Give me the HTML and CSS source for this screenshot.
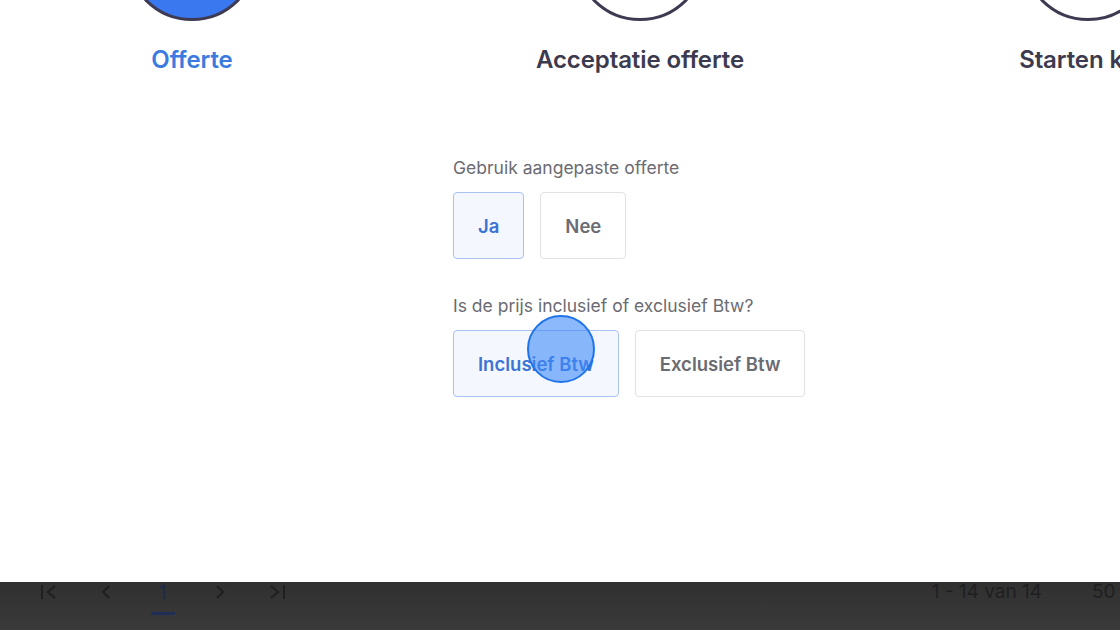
FILE: index.html
```html
<!DOCTYPE html>
<html lang="nl">
<head>
<meta charset="utf-8">
<title>Offerte</title>
<link rel="stylesheet" href="styles.css">
</head>
<body>
<div class="page">
  <main class="content">
    <div class="steps">
      <div class="step active">
        <div class="circle"></div>
        <div class="step-label">Offerte</div>
      </div>
      <div class="step">
        <div class="circle"></div>
        <div class="step-label">Acceptatie offerte</div>
      </div>
      <div class="step">
        <div class="circle"></div>
        <div class="step-label">Starten klus</div>
      </div>
    </div>

    <form class="form">
      <div class="field">
        <div class="field-label">Gebruik aangepaste offerte</div>
        <div class="options">
          <button type="button" class="option selected">Ja</button>
          <button type="button" class="option">Nee</button>
        </div>
      </div>
      <div class="field">
        <div class="field-label">Is de prijs inclusief of exclusief Btw?</div>
        <div class="options">
          <button type="button" class="option selected">Inclusief Btw<span class="cursor"></span></button>
          <button type="button" class="option">Exclusief Btw</button>
        </div>
      </div>
    </form>
  </main>

  <footer class="pager">
    <div class="pages">
      <span class="pg"><svg width="18" height="16" viewBox="0 0 18 16"><path d="M2 1v14M15 2L8 8l7 6" fill="none" stroke="currentColor" stroke-width="2"/></svg></span>
      <span class="pg"><svg width="12" height="16" viewBox="0 0 12 16"><path d="M9 2L3 8l6 6" fill="none" stroke="currentColor" stroke-width="2"/></svg></span>
      <span class="pg current">1</span>
      <span class="pg"><svg width="12" height="16" viewBox="0 0 12 16"><path d="M3 2l6 6-6 6" fill="none" stroke="currentColor" stroke-width="2"/></svg></span>
      <span class="pg"><svg width="18" height="16" viewBox="0 0 18 16"><path d="M3 2l7 6-7 6M16 1v14" fill="none" stroke="currentColor" stroke-width="2"/></svg></span>
    </div>
    <div class="range">1 - 14 van 14</div>
    <div class="per-page">50</div>
  </footer>
</div>
</body>
</html>
```

FILE: styles.css
```css
html, body {
  margin: 0;
  padding: 0;
  background: #ffffff;
  overflow: hidden;
}

body {
  font-family: Inter, "Noto Sans", "Liberation Sans", sans-serif;
  color: #3c3a4e;
}

.page {
  width: 1120px;
  height: 630px;
  display: flex;
  flex-direction: column;
  overflow: hidden;
}

.content {
  flex: 1;
  min-height: 0;
}

.steps {
  display: flex;
  margin-left: -32px;
  margin-top: -111px;
}

.step {
  flex: 0 0 448px;
  display: flex;
  flex-direction: column;
  align-items: center;
}

.circle {
  width: 132px;
  height: 132px;
  box-sizing: border-box;
  border: 3px solid #3d3a52;
  border-radius: 50%;
  background: #ffffff;
}

.step.active .circle {
  background: #3a78f0;
}

.step-label {
  margin-top: 24px;
  font-size: 24px;
  line-height: 30px;
  font-weight: 600;
  color: #3c3a4e;
  white-space: nowrap;
  letter-spacing: -0.1px;
}

.step.active .step-label {
  color: #3b7be0;
}

.form {
  padding-left: 453px;
  padding-top: 81px;
  display: flex;
  flex-direction: column;
  gap: 35px;
}

.field-label {
  font-size: 17.5px;
  line-height: 24px;
  color: #6b6b72;
  margin-bottom: 12px;
}

.options {
  display: flex;
  gap: 16px;
}

.option {
  position: relative;
  height: 67px;
  padding: 0 24px;
  box-sizing: border-box;
  border: 1px solid #e2e2e6;
  border-radius: 4px;
  background: #ffffff;
  font-family: inherit;
  font-size: 18.5px;
  font-weight: 600;
  color: #6b6b72;
  cursor: pointer;
}

.option.selected {
  background: #f4f7fd;
  border-color: #a8c3ef;
  color: #3b74d6;
}

.cursor {
  position: absolute;
  left: 73px;
  top: -16px;
  width: 68px;
  height: 68px;
  box-sizing: border-box;
  border-radius: 50%;
  border: 2px solid #1f74e8;
  background: rgba(64, 138, 250, 0.6);
}

.pager {
  height: 48px;
  flex: 0 0 48px;
  background: linear-gradient(#303030, #3a3a3a);
  display: flex;
  align-items: flex-start;
  color: #1f1f22;
  font-size: 19px;
  line-height: 20px;
}

.pages {
  display: flex;
  margin-left: 20px;
  margin-top: 0;
}

.pg {
  width: 57px;
  height: 32px;
  display: flex;
  justify-content: center;
  align-items: flex-start;
  padding-top: 1px;
  box-sizing: border-box;
}

.pg svg {
  margin-top: 1px;
}

.pg.current {
  color: #1b2a4c;
  position: relative;
}

.pg.current::after {
  content: "";
  position: absolute;
  left: 17px;
  top: 30px;
  width: 24px;
  height: 3px;
  background: #1d2f56;
}

.range {
  margin-left: auto;
  margin-top: 0;
  white-space: nowrap;
}

.per-page {
  margin-left: 50px;
  margin-right: -24px;
  width: 52px;
}
```
